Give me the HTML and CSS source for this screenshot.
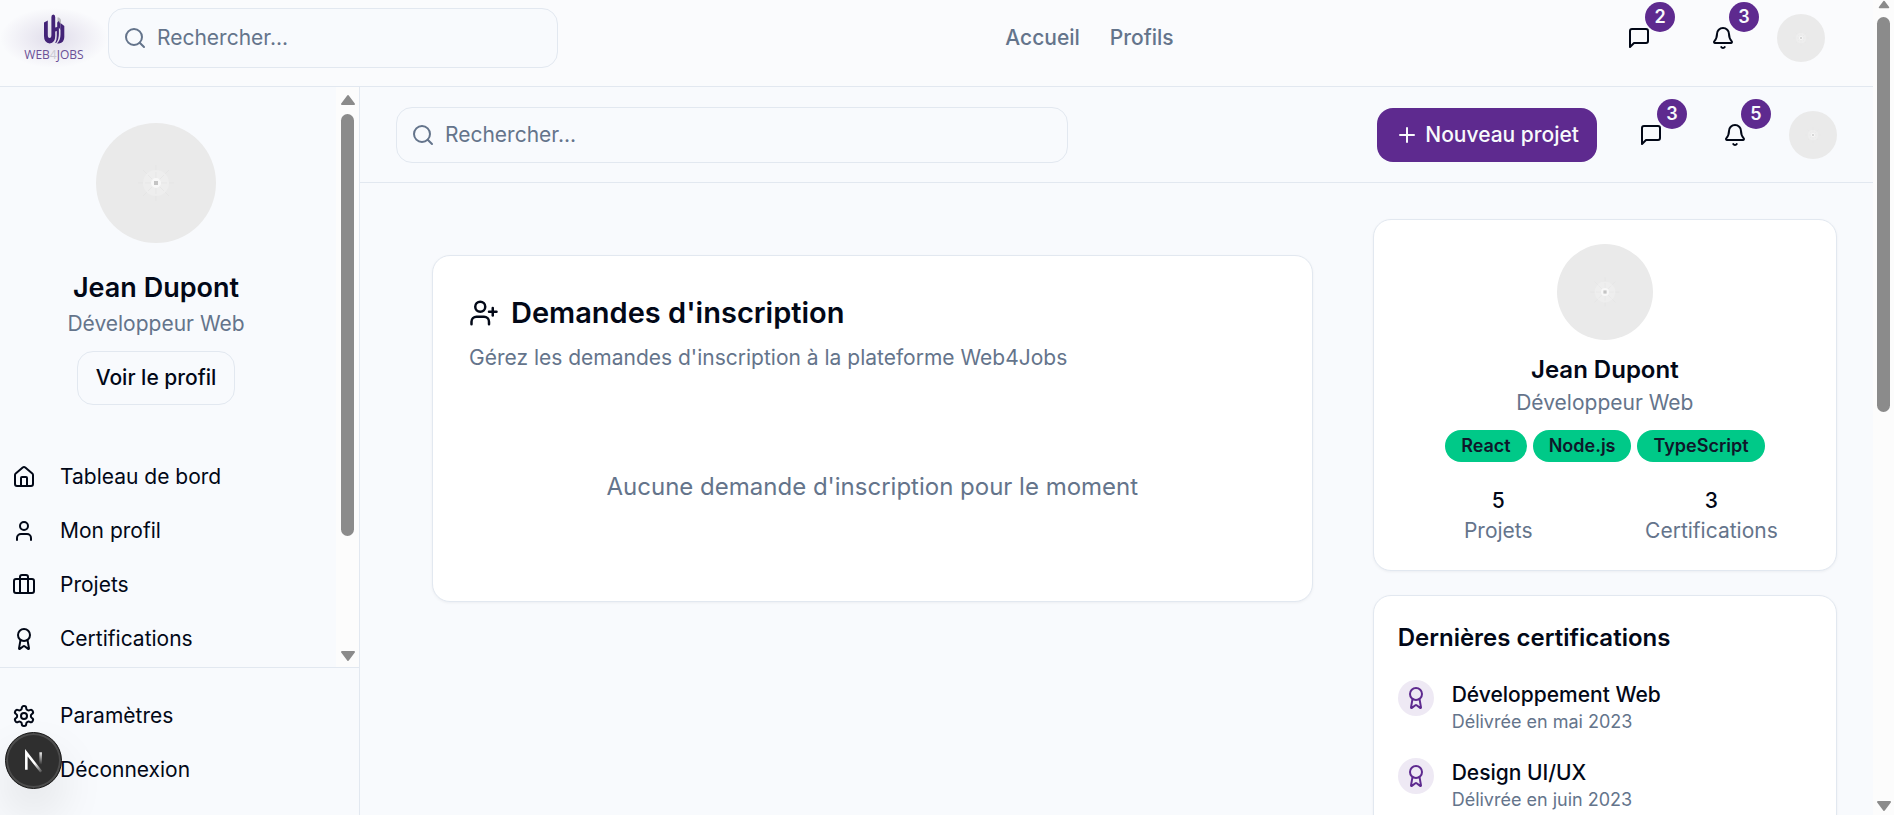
FILE: index.html
```html
<!DOCTYPE html>
<html lang="fr">
<head>
<meta charset="utf-8">
<meta name="viewport" content="width=device-width, initial-scale=1">
<title>Web4Jobs</title>
<link rel="stylesheet" href="styles.css">
</head>
<body>
<svg class="sprite" aria-hidden="true">
  <symbol id="i-search" viewBox="0 0 24 24"><circle cx="11" cy="11" r="8"/><path d="m21 21-4.3-4.3"/></symbol>
  <symbol id="i-message" viewBox="0 0 24 24"><path d="M21 15a2 2 0 0 1-2 2H7l-4 4V5a2 2 0 0 1 2-2h14a2 2 0 0 1 2 2z"/></symbol>
  <symbol id="i-bell" viewBox="0 0 24 24"><path d="M10.268 21a2 2 0 0 0 3.464 0"/><path d="M3.262 15.326A1 1 0 0 0 4 17h16a1 1 0 0 0 .74-1.673C19.41 13.956 18 12.499 18 8A6 6 0 0 0 6 8c0 4.499-1.411 5.956-2.738 7.326"/></symbol>
  <symbol id="i-plus" viewBox="0 0 24 24"><path d="M5 12h14"/><path d="M12 5v14"/></symbol>
  <symbol id="i-home" viewBox="0 0 24 24"><path d="M15 21v-8a1 1 0 0 0-1-1h-4a1 1 0 0 0-1 1v8"/><path d="M3 10a2 2 0 0 1 .709-1.528l7-5.999a2 2 0 0 1 2.582 0l7 5.999A2 2 0 0 1 21 10v9a2 2 0 0 1-2 2H5a2 2 0 0 1-2-2z"/></symbol>
  <symbol id="i-user" viewBox="0 0 24 24"><path d="M19 21v-2a4 4 0 0 0-4-4H9a4 4 0 0 0-4 4v2"/><circle cx="12" cy="7" r="4"/></symbol>
  <symbol id="i-user-plus" viewBox="0 0 24 24"><path d="M16 21v-2a4 4 0 0 0-4-4H6a4 4 0 0 0-4 4v2"/><circle cx="9" cy="7" r="4"/><path d="M19 8v6"/><path d="M22 11h-6"/></symbol>
  <symbol id="i-case" viewBox="0 0 24 24"><path d="M16 20V4a2 2 0 0 0-2-2h-4a2 2 0 0 0-2 2v16"/><rect width="20" height="14" x="2" y="6" rx="2"/></symbol>
  <symbol id="i-award" viewBox="0 0 24 24"><path d="m15.477 12.89 1.515 8.526a.5.5 0 0 1-.81.47l-3.58-2.687a1 1 0 0 0-1.197 0l-3.586 2.686a.5.5 0 0 1-.81-.469l1.514-8.526"/><circle cx="12" cy="8" r="6"/></symbol>
  <symbol id="i-settings" viewBox="0 0 24 24"><path d="M12.22 2h-.44a2 2 0 0 0-2 2v.18a2 2 0 0 1-1 1.73l-.43.25a2 2 0 0 1-2 0l-.15-.08a2 2 0 0 0-2.73.73l-.22.38a2 2 0 0 0 .73 2.73l.15.1a2 2 0 0 1 1 1.72v.51a2 2 0 0 1-1 1.74l-.15.09a2 2 0 0 0-.73 2.73l.22.38a2 2 0 0 0 2.73.73l.15-.08a2 2 0 0 1 2 0l.43.25a2 2 0 0 1 1 1.73V20a2 2 0 0 0 2 2h.44a2 2 0 0 0 2-2v-.18a2 2 0 0 1 1-1.73l.43-.25a2 2 0 0 1 2 0l.15.08a2 2 0 0 0 2.73-.73l.22-.39a2 2 0 0 0-.73-2.73l-.15-.08a2 2 0 0 1-1-1.74v-.5a2 2 0 0 1 1-1.74l.15-.09a2 2 0 0 0 .73-2.73l-.22-.38a2 2 0 0 0-2.73-.73l-.15.08a2 2 0 0 1-2 0l-.43-.25a2 2 0 0 1-1-1.73V4a2 2 0 0 0-2-2z"/><circle cx="12" cy="12" r="3"/></symbol>
  <symbol id="i-logout" viewBox="0 0 24 24"><path d="m16 17 5-5-5-5"/><path d="M21 12H9"/><path d="M9 21H5a2 2 0 0 1-2-2V5a2 2 0 0 1 2-2h4"/></symbol>
  <symbol id="i-placeholder" viewBox="0 0 120 120">
    <rect width="120" height="120" fill="#eaeaea" stroke="none"/>
    <path d="M60 42v36M42 60h36M47 47l26 26M73 47 47 73" stroke="#e5e5e5" stroke-width="1"/>
    <circle cx="60" cy="60" r="13" fill="#eeeeee" stroke="none"/>
    <path d="M60 49v22M49 60h22M52 52l16 16M68 52 52 68" stroke="#e7e7e7" stroke-width="1"/>
    <circle cx="60" cy="60" r="5" fill="#f8f8f8" stroke="none"/>
    <rect x="58" y="58" width="4" height="4" fill="#c4c4c4" stroke="none"/>
  </symbol>
  <symbol id="i-arrow" viewBox="0 0 16 12"><path d="M8 2 14 10H2Z" fill="#8b8b8b" stroke="#8b8b8b" stroke-width="2"/></symbol>
</svg>

<div class="page">
  <header class="topbar">
    <a class="logo" href="#" aria-label="Web4Jobs">
      <svg class="logo-mark" viewBox="0 0 22 30" aria-hidden="true">
        <path d="M16 3.500 18 5.500v5L14.500 8V3.500Z" fill="#b9b9be"/>
        <path d="M1 8.500 4.800 6.500V21q0 3 1.800 3t1.800-3V3q0-2.500 1.900-2.500T12.200 3v10.500l2-.5V8.500l1.700-1.500 1.600 3.500V16l-1.600-2.500v6q0 6-2.700 9.500h-1q1.600-3 1.600-7v-5l-1.600.500V22q0 7-5.500 7.500Q1 29 1 22Z" fill="#432377"/>
        <path d="M17.500 9 21.300 12v11q0 5.500-5.300 6.500h-2q3.500-3.500 3.500-9Z" fill="#432377"/>
      </svg>
      <span class="logo-text">WEB<i>4</i>JOBS</span>
    </a>
    <div class="search search-top">
      <svg class="icon"><use href="#i-search"/></svg>
      <input type="search" placeholder="Rechercher..." aria-label="Rechercher sur le site">
    </div>
    <nav class="topnav">
      <a href="#">Accueil</a>
      <a href="#">Profils</a>
    </nav>
    <div class="actions">
      <button class="icon-button" type="button" aria-label="Messages"><svg class="icon"><use href="#i-message"/></svg><span class="count">2</span></button>
      <button class="icon-button" type="button" aria-label="Notifications"><svg class="icon"><use href="#i-bell"/></svg><span class="count">3</span></button>
      <svg class="avatar avatar-s"><use href="#i-placeholder"/></svg>
    </div>
  </header>

  <div class="shell">
    <aside class="sidebar">
      <div class="side-scroll">
        <div class="side-content">
          <div class="side-profile">
            <svg class="avatar avatar-l"><use href="#i-placeholder"/></svg>
            <h2>Jean Dupont</h2>
            <p>Développeur Web</p>
            <button class="outline-button" type="button">Voir le profil</button>
          </div>
          <nav class="menu">
            <a href="#"><svg class="icon"><use href="#i-home"/></svg>Tableau de bord</a>
            <a href="#"><svg class="icon"><use href="#i-user"/></svg>Mon profil</a>
            <a href="#"><svg class="icon"><use href="#i-case"/></svg>Projets</a>
            <a href="#"><svg class="icon"><use href="#i-award"/></svg>Certifications</a>
          </nav>
        </div>
        <div class="scrollbar scrollbar-side" aria-hidden="true">
          <svg class="arrow"><use href="#i-arrow"/></svg>
          <div class="track"><div class="thumb"></div></div>
          <svg class="arrow arrow-down"><use href="#i-arrow"/></svg>
        </div>
      </div>
      <nav class="menu menu-foot">
        <a href="#"><svg class="icon"><use href="#i-settings"/></svg>Paramètres</a>
        <a href="#"><svg class="icon"><use href="#i-logout"/></svg>Déconnexion</a>
      </nav>
    </aside>

    <div class="main">
      <header class="subbar">
        <div class="search search-main">
          <svg class="icon"><use href="#i-search"/></svg>
          <input type="search" placeholder="Rechercher..." aria-label="Rechercher dans le tableau de bord">
        </div>
        <div class="actions">
          <button class="primary-button" type="button"><svg class="icon"><use href="#i-plus"/></svg>Nouveau projet</button>
          <button class="icon-button" type="button" aria-label="Messages"><svg class="icon"><use href="#i-message"/></svg><span class="count">3</span></button>
          <button class="icon-button" type="button" aria-label="Notifications"><svg class="icon"><use href="#i-bell"/></svg><span class="count">5</span></button>
          <svg class="avatar avatar-s"><use href="#i-placeholder"/></svg>
        </div>
      </header>

      <main class="content">
        <div class="primary">
          <section class="card requests">
            <h1><svg class="icon icon-l"><use href="#i-user-plus"/></svg>Demandes d'inscription</h1>
            <p class="lead">Gérez les demandes d'inscription à la plateforme Web4Jobs</p>
            <p class="empty">Aucune demande d'inscription pour le moment</p>
          </section>
        </div>
        <div class="secondary">
          <section class="card profile">
            <svg class="avatar avatar-m"><use href="#i-placeholder"/></svg>
            <h3>Jean Dupont</h3>
            <p>Développeur Web</p>
            <ul class="tags"><li>React</li><li>Node.js</li><li>TypeScript</li></ul>
            <dl class="stats">
              <div><dd>5</dd><dt>Projets</dt></div>
              <div><dd>3</dd><dt>Certifications</dt></div>
            </dl>
          </section>
          <section class="card certs">
            <h3>Dernières certifications</h3>
            <ul>
              <li><span class="medal"><svg class="icon"><use href="#i-award"/></svg></span><div><strong>Développement Web</strong><small>Délivrée en mai 2023</small></div></li>
              <li><span class="medal"><svg class="icon"><use href="#i-award"/></svg></span><div><strong>Design UI/UX</strong><small>Délivrée en juin 2023</small></div></li>
            </ul>
          </section>
        </div>
      </main>
    </div>
  </div>
</div>

<div class="scrollbar scrollbar-page" aria-hidden="true">
  <svg class="arrow"><use href="#i-arrow"/></svg>
  <div class="track"><div class="thumb"></div></div>
  <svg class="arrow arrow-down"><use href="#i-arrow"/></svg>
</div>

<button class="dev-badge" type="button" aria-label="Outils Next.js">
  <svg viewBox="0 0 40 40" aria-hidden="true">
    <defs>
      <linearGradient id="n-diag" gradientUnits="userSpaceOnUse" x1="22" y1="22" x2="30" y2="32"><stop offset="0" stop-color="#fff"/><stop offset="1" stop-color="#fff" stop-opacity="0"/></linearGradient>
      <linearGradient id="n-bar" gradientUnits="userSpaceOnUse" x1="0" y1="11" x2="0" y2="24"><stop offset="0" stop-color="#fff"/><stop offset="1" stop-color="#fff" stop-opacity="0"/></linearGradient>
    </defs>
    <path d="M13 29V12.500L27.500 31" fill="none" stroke="url(#n-diag)" stroke-width="2.500"/>
    <path d="M27 12v13" fill="none" stroke="url(#n-bar)" stroke-width="2.500"/>
  </svg>
</button>
</body>
</html>
```
FILE: styles.css
```css
:root {
  --page: #f8fafd;
  --text: #020817;
  --muted: #64748b;
  --border: #e2e8f0;
  --purple: #5e2a8f;
  --green: #00c988;
}

* { box-sizing: border-box; }

body {
  margin: 0;
  display: flex;
  height: 100vh;
  overflow: hidden;
  background: var(--page);
  color: var(--text);
  font: 400 21px/30px Inter, "Liberation Sans", sans-serif;
}

h1, h2, h3, p, ul, dl, dd { margin: 0; padding: 0; }
h1, h2, h3 { font-weight: 600; }
ul { list-style: none; }
a { color: inherit; text-decoration: none; }
button, input { font: inherit; color: inherit; }
button { cursor: pointer; border: 0; background: none; }

.sprite { position: absolute; width: 0; height: 0; }

.icon {
  flex: none;
  width: 24px;
  height: 24px;
  fill: none;
  stroke: currentColor;
  stroke-width: 2;
  stroke-linecap: round;
  stroke-linejoin: round;
}
.icon-l { width: 30px; height: 30px; }

.avatar { flex: none; display: block; border-radius: 50%; }
.avatar-s { width: 48px; height: 48px; }
.avatar-m { width: 96px; height: 96px; }
.avatar-l { width: 120px; height: 120px; }

.page {
  flex: 1;
  min-width: 0;
  display: flex;
  flex-direction: column;
}

/* Top bar */
.topbar {
  flex: none;
  display: flex;
  align-items: center;
  justify-content: space-between;
  padding: 8px 48px 18px 0;
  border-bottom: 1px solid var(--border);
  background: #fafbfd;
}
.logo {
  flex: none;
  align-self: stretch;
  width: 108px;
  display: flex;
  flex-direction: column;
  align-items: center;
  justify-content: center;
  gap: 4px;
  background: radial-gradient(ellipse closest-side, rgba(67, 35, 119, .14), transparent);
}
.logo-mark { width: 22px; height: 30px; }
.logo-text {
  font: 400 12px/14px "Open Sans", sans-serif;
  color: #6a4f96;
}
.logo-text i { font-style: normal; color: #c9c9d2; }

.search {
  display: flex;
  align-items: center;
  gap: 10px;
  padding: 0 14px;
  border: 1px solid var(--border);
  border-radius: 16px;
  background: var(--page);
  color: var(--muted);
}
.search input {
  flex: 1;
  min-width: 0;
  padding: 0;
  border: 0;
  outline: 0;
  background: none;
}
.search input::placeholder { color: var(--muted); opacity: 1; }
.search-top { flex: 0 1 450px; height: 60px; }
.search-main { flex: 0 1 672px; height: 56px; }

.topnav {
  display: flex;
  gap: 30px;
  margin: 0 auto;
  padding-left: 12px;
  font-weight: 500;
  color: var(--muted);
}

.actions { display: flex; align-items: center; gap: 24px; }
.icon-button {
  position: relative;
  display: grid;
  place-items: center;
  width: 60px;
  height: 60px;
  padding: 0;
}
.count {
  position: absolute;
  top: -6px;
  right: -6px;
  width: 30px;
  height: 30px;
  border-radius: 50%;
  background: var(--purple);
  color: #f8fafc;
  font-size: 18px;
  font-weight: 600;
  line-height: 30px;
}

/* Sidebar */
.shell { flex: 1; min-height: 0; display: flex; }
.sidebar {
  flex: none;
  width: 360px;
  display: flex;
  flex-direction: column;
  border-right: 1px solid var(--border);
}
.side-scroll { flex: 1; min-height: 0; display: flex; }
.side-content { flex: 1; overflow: hidden; }
.side-profile {
  display: flex;
  flex-direction: column;
  align-items: center;
  padding: 36px 24px 45px 0;
}
.side-profile h2 { margin-top: 24px; font-size: 27px; line-height: 42px; }
.side-profile p { color: var(--muted); }
.outline-button {
  height: 54px;
  margin-top: 12px;
  padding: 0 18px;
  border: 1px solid var(--border);
  border-radius: 16px;
  font-weight: 500;
}
.menu a {
  display: flex;
  align-items: center;
  gap: 24px;
  height: 54px;
  padding: 0 12px;
}
.menu-foot {
  flex: none;
  padding: 21px 0 18px;
  border-top: 1px solid var(--border);
}

/* Scrollbars */
.scrollbar {
  flex: none;
  display: flex;
  flex-direction: column;
  align-items: center;
  gap: 8px;
  background: #fcfcfc;
}
.scrollbar-side { width: 23px; padding: 7px 0 5px; }
.scrollbar-page { width: 21px; padding-bottom: 3px; }
.arrow { flex: none; width: 16px; height: 12px; stroke-linejoin: round; }
.arrow-down { transform: rotate(180deg); }
.scrollbar-page .arrow:first-child { height: 9px; }
.track { flex: 1; width: 13px; }
.thumb { border-radius: 7px; background: #8b8b8b; }
.scrollbar-side .thumb { height: 80%; }
.scrollbar-page .thumb { height: 51%; }

/* Main area */
.main { flex: 1; min-width: 0; display: flex; flex-direction: column; }
.subbar {
  flex: none;
  display: flex;
  align-items: center;
  justify-content: space-between;
  padding: 18px 36px 17px;
  border-bottom: 1px solid var(--border);
}
.primary-button {
  display: flex;
  align-items: center;
  gap: 6px;
  height: 54px;
  padding: 0 18px;
  border-radius: 16px;
  background: var(--purple);
  color: #f8fafc;
  font-weight: 500;
}
.content {
  flex: 1;
  min-height: 0;
  overflow: hidden;
  display: grid;
  grid-template-columns: repeat(3, minmax(0, 1fr));
  gap: 24px;
  padding: 36px 36px 0;
}
.primary { grid-column: span 2; padding: 36px; }
.secondary { display: flex; flex-direction: column; gap: 24px; }
.card {
  flex: none;
  border: 1px solid var(--border);
  border-radius: 18px;
  background: #fff;
  box-shadow: 0 1px 3px rgba(15, 23, 42, .05);
}
.requests { padding: 36px; }
.requests h1 {
  display: flex;
  align-items: center;
  gap: 12px;
  font-size: 29px;
  line-height: 42px;
}
.lead { margin-top: 9px; color: var(--muted); }
.empty {
  padding: 96px 0 60px;
  color: var(--muted);
  font-size: 24px;
  line-height: 36px;
  text-align: center;
}

.profile {
  display: flex;
  flex-direction: column;
  align-items: center;
  padding: 24px;
}
.profile h3, .certs h3 { font-size: 24px; line-height: 36px; }
.profile h3 { margin-top: 12px; }
.profile p { color: var(--muted); }
.tags { display: flex; gap: 6px; margin-top: 12px; }
.tags li {
  padding: 0 16px;
  border-radius: 16px;
  background: var(--green);
  color: #0f172a;
  font-size: 18px;
  font-weight: 600;
  line-height: 32px;
}
.stats {
  align-self: stretch;
  display: grid;
  grid-template-columns: 1fr 1fr;
  gap: 12px;
  margin-top: 24px;
  text-align: center;
}
.stats dd { font-weight: 500; }
.stats dt { color: var(--muted); }

.certs { padding: 24px; }
.certs ul { display: grid; gap: 24px; margin-top: 24px; }
.certs li { display: flex; gap: 18px; }
.medal {
  flex: none;
  display: grid;
  place-items: center;
  width: 36px;
  height: 36px;
  border-radius: 50%;
  background: #eee9f4;
  color: var(--purple);
}
.certs strong { display: block; font-weight: 500; }
.certs small {
  display: block;
  color: var(--muted);
  font-size: 18px;
  line-height: 24px;
}

/* Floating developer tools button */
.dev-badge {
  position: fixed;
  left: 5px;
  bottom: 26px;
  width: 57px;
  height: 57px;
  padding: 7px;
  border: 1px solid #171717;
  border-radius: 50%;
  background: #2f2f2f;
  box-shadow: inset 0 0 0 2px #4c4c4c, 0 24px 48px rgba(0, 0, 0, .1);
}
.dev-badge svg { display: block; width: 100%; height: 100%; }
```
